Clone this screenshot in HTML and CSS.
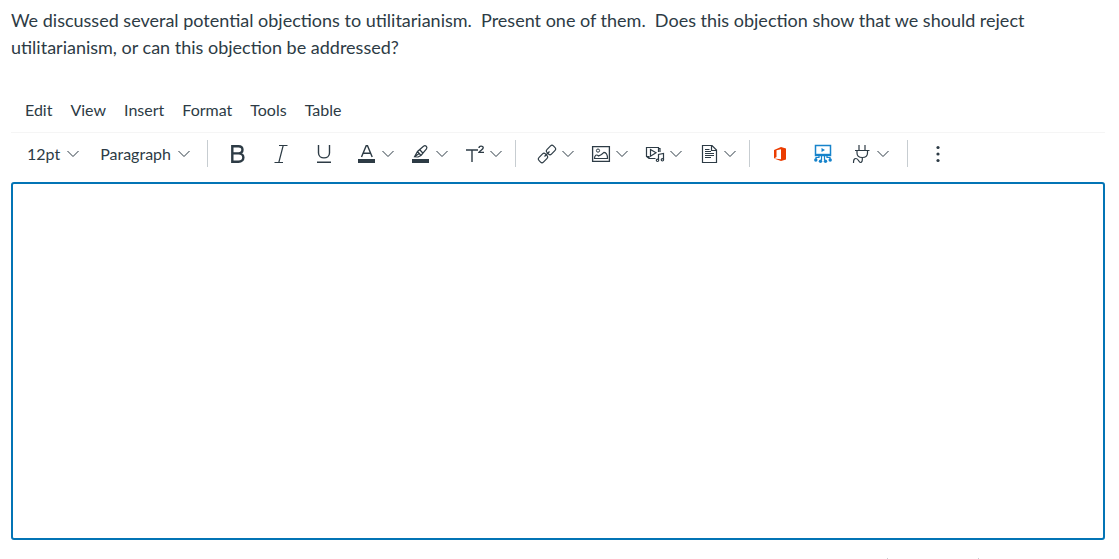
FILE: index.html
```html
<!DOCTYPE html>
<html lang="en">
<head>
    <meta charset="UTF-8">
    <meta name="viewport" content="width=device-width, initial-scale=1.0">
    <title>Essay Question</title>
    <link rel="stylesheet" href="styles.css">
</head>
<body>
    <svg class="defs" width="0" height="0" aria-hidden="true">
        <symbol id="chevron" viewBox="0 0 12 8">
            <path d="M0.5 1 L6 6.5 L11.5 1" fill="none" stroke="currentColor" stroke-width="1"/>
        </symbol>
    </svg>

    <div class="question">
        <p class="question-text">We discussed several potential objections to utilitarianism.&nbsp; Present one of them.&nbsp; Does this objection show that we should reject utilitarianism, or can this objection be addressed?</p>

        <div class="editor">
            <div class="menubar">
                <button type="button">Edit</button>
                <button type="button">View</button>
                <button type="button">Insert</button>
                <button type="button">Format</button>
                <button type="button">Tools</button>
                <button type="button">Table</button>
            </div>

            <div class="toolbar">
                <div class="group group-text">
                    <button type="button" class="picker">12pt <svg class="chevron"><use href="#chevron"/></svg></button>
                    <button type="button" class="picker">Paragraph <svg class="chevron"><use href="#chevron"/></svg></button>
                </div>

                <div class="group group-format">
                    <button type="button" class="tool" aria-label="Bold">
                        <svg class="icon" viewBox="0 0 18 18"><path d="M3.5 1.2H9.5C14.8 1.2 14.8 8.4 9.5 8.4H3.5M9.5 8.4C16 8.4 16 16.8 9.5 16.8H3.5M3.3 0V18" fill="none" stroke="currentColor" stroke-width="2.4"/></svg>
                    </button>
                    <button type="button" class="tool" aria-label="Italic">
                        <svg class="icon" viewBox="0 0 18 18"><path d="M7 .5H15.5M2.5 17.5H11M11.2 .5L6.8 17.5" fill="none" stroke="currentColor" stroke-width="1.2"/></svg>
                    </button>
                    <button type="button" class="tool" aria-label="Underline">
                        <svg class="icon" viewBox="0 0 18 18"><path d="M3.5 0V8C3.5 14.5 14.5 14.5 14.5 8V0M2 17.3H16" fill="none" stroke="currentColor" stroke-width="1.4"/></svg>
                    </button>
                    <button type="button" class="split split-first" aria-label="Text color">
                        <svg class="icon" viewBox="0 0 18 18"><path d="M3.5 12L8.2 .7H9.5L14.2 12M5.2 8.3H12.5" fill="none" stroke="currentColor" stroke-width="1.4"/><path d="M0 14H17V18H0Z" fill="currentColor"/></svg>
                        <svg class="chevron"><use href="#chevron"/></svg>
                    </button>
                    <button type="button" class="split" aria-label="Background color">
                        <svg class="icon" viewBox="0 0 18 18"><path d="M2.5 11.8L5.5 6.5L11.5 1.2C13.5 -.3 15.8 1.8 14.5 4L9 10.5L6 12ZM5.5 6.5L9 10.5M2.5 11.8L6.8 8.8M8 5L10.8 8" fill="none" stroke="currentColor" stroke-width="1.2"/><path d="M0 14H17V18H0Z" fill="currentColor"/></svg>
                        <svg class="chevron"><use href="#chevron"/></svg>
                    </button>
                    <button type="button" class="split" aria-label="Superscript and subscript">
                        <svg class="icon" viewBox="0 0 18 18"><path d="M0 5H12M6 5V17" fill="none" stroke="currentColor" stroke-width="1.4"/><path d="M13 3C13 .7 17.2 .5 17.2 2.8C17.2 4.5 14 5.5 13 7.4H18" fill="none" stroke="currentColor" stroke-width="1.4"/></svg>
                        <svg class="chevron"><use href="#chevron"/></svg>
                    </button>
                </div>

                <div class="group group-insert">
                    <button type="button" class="split" aria-label="Links">
                        <svg class="icon" viewBox="0 0 18 18"><g fill="none" stroke="currentColor" stroke-width="1.2"><rect x="-4.6" y="-3.2" width="9.2" height="6.4" rx="2" transform="translate(13 5) rotate(-45)"/><rect x="-4.6" y="-3.2" width="9.2" height="6.4" rx="2" transform="translate(5 13) rotate(-45)"/><path d="M6.5 11.5L11.5 6.5"/></g></svg>
                        <svg class="chevron"><use href="#chevron"/></svg>
                    </button>
                    <button type="button" class="split" aria-label="Images">
                        <svg class="icon" viewBox="0 0 18 18"><g fill="none" stroke="currentColor"><path d="M.6 1.6H17.4V16.4H.6Z" stroke-width="1.3"/><circle cx="6" cy="5.6" r="1.6"/><path d="M2.5 13.5C2.5 9.8 4.7 9.2 6.5 11L9.5 9.5L12 7.3C14 7.5 15.5 10 15.5 13.5Z" stroke-width="1.2"/></g></svg>
                        <svg class="chevron"><use href="#chevron"/></svg>
                    </button>
                    <button type="button" class="split" aria-label="Record or upload media">
                        <svg class="icon" viewBox="0 0 18 18"><g fill="none" stroke="currentColor" stroke-width="1.2"><path d="M9.5 13.5H3L.5 11.5V2.5H12.5V7M3 13.5V11.5H.5M12.5 3.5H14V7"/><path d="M4.5 4.5L10 7.8L4.5 11.2Z"/><path d="M12.5 15V9.5L17.5 8.5V14.5"/><circle cx="11.5" cy="15.3" r="1.2"/><circle cx="16.4" cy="14.8" r="1.2"/></g></svg>
                        <svg class="chevron"><use href="#chevron"/></svg>
                    </button>
                    <button type="button" class="split" aria-label="Documents">
                        <svg class="icon" viewBox="0 0 18 18"><g fill="none" stroke="currentColor"><path d="M2.5 .5H12L16.5 5V17.5H2.5ZM11.5 .5V5.5H16.5" stroke-width="1.2"/><path d="M5 4.5H9.5M5 6.5H11M5 8.5H14M5 10.5H14M5 12.5H11"/></g></svg>
                        <svg class="chevron"><use href="#chevron"/></svg>
                    </button>
                </div>

                <div class="group group-apps">
                    <button type="button" class="tool" aria-label="Office 365">
                        <svg class="icon" viewBox="0 0 18 18"><path d="M3 5L10 2L15 3.5V14.5L10 16L3 13.5L10 14.3V4.2L5.5 5.3V12L3 13.5Z" fill="#eb3c00"/></svg>
                    </button>
                    <button type="button" class="tool" aria-label="Studio">
                        <svg class="icon" viewBox="0 0 18 18"><g fill="none" stroke="#1683cb"><path d="M1.5 .5H16.5V10.5H1.5Z" stroke-width="1.5"/><path d="M1 9.8H17" stroke-width="2"/><path d="M7.5 10V15M10.5 10V15M5 10V12.5H2V14M13 10V12.5H16V14" stroke-width="1.2"/></g><g fill="#1683cb"><circle cx="1.8" cy="15" r="1.7"/><circle cx="6.5" cy="16.3" r="1.7"/><circle cx="11.5" cy="16.3" r="1.7"/><circle cx="16.2" cy="15" r="1.7"/><path d="M7.5 3L11 5L7.5 7Z"/></g></svg>
                    </button>
                    <button type="button" class="split" aria-label="Apps">
                        <svg class="icon" viewBox="0 0 18 18"><path d="M6 0V5M12 0V5M2 5.5H16.5M4 5.5V8C4 11 6 12.5 9.3 12.5C12.5 12.5 14.5 11 14.5 8V5.5M9.3 12.5C9.5 16 9 17.5 7.5 17.5C5.5 17.5 5.8 13.5 3 13.5C1 13.5 .5 15 .5 18" fill="none" stroke="currentColor" stroke-width="1.2"/></svg>
                        <svg class="chevron"><use href="#chevron"/></svg>
                    </button>
                </div>

                <div class="group group-more">
                    <button type="button" class="tool" aria-label="More">
                        <svg class="icon" viewBox="0 0 18 18"><g fill="currentColor"><circle cx="9" cy="2.5" r="1.6"/><circle cx="9" cy="9" r="1.6"/><circle cx="9" cy="15.5" r="1.6"/></g></svg>
                    </button>
                </div>
            </div>

            <textarea class="content" aria-label="Rich Content Editor"></textarea>

            <div class="statusbar">
                <span class="separator"></span>
                <span class="separator"></span>
            </div>
        </div>
    </div>
</body>
</html>
```
FILE: styles.css
```css
body {
    margin: 0;
    background-color: #fff;
    color: #2d3b45;
    font-family: Lato, "Liberation Sans", sans-serif;
    font-size: 16px;
    overflow: hidden;
}
.defs {
    display: block;
}
.question {
    display: flex;
    flex-direction: column;
    height: 100vh;
    box-sizing: border-box;
    padding: 7px 14px 0 11px;
}
.question-text {
    margin: 0 0 29px;
    font-size: 18px;
    line-height: 27px;
}
.editor {
    flex: 1;
    display: flex;
    flex-direction: column;
}
button {
    display: flex;
    align-items: center;
    justify-content: center;
    margin: 0;
    padding: 0;
    border: none;
    background: none;
    color: inherit;
    font-family: inherit;
    font-size: 16px;
    line-height: 24px;
    cursor: pointer;
}
.menubar {
    display: flex;
    gap: 18px;
    padding: 8px 14px 10px;
}
.toolbar {
    display: flex;
    align-items: center;
    border-top: 1px solid #f5f5f5;
    padding: 7px 0 15px;
}
.group {
    display: flex;
    align-items: center;
    height: 27px;
    border-right: 1px solid #c7cdd1;
}
.group-text {
    gap: 21px;
    padding: 0 17px 0 16px;
}
.group-format {
    padding: 0 4px 0 8px;
}
.group-insert {
    padding: 0 4px 0 13px;
}
.group-apps {
    padding: 0 9px 0 8px;
}
.group-more {
    border-right: none;
    padding-left: 8px;
}
.picker {
    gap: 7px;
}
.tool {
    width: 43px;
    height: 27px;
}
.split {
    gap: 6px;
    padding: 0 9px;
    height: 27px;
}
.split-first {
    margin-left: 4px;
}
.icon {
    width: 18px;
    height: 18px;
    overflow: visible;
}
.chevron {
    width: 12px;
    height: 8px;
}
.content {
    display: block;
    flex: 1;
    width: 100%;
    box-sizing: border-box;
    border: 2px solid #0374b5;
    border-radius: 3px;
    padding: 12px;
    font-family: inherit;
    font-size: 16px;
    color: inherit;
    resize: none;
    outline: none;
}
.statusbar {
    display: flex;
    justify-content: flex-end;
    gap: 90px;
    height: 1px;
    padding: 18px 126px 0 0;
}
.separator {
    width: 1px;
    background-color: #c7cdd1;
}
```
